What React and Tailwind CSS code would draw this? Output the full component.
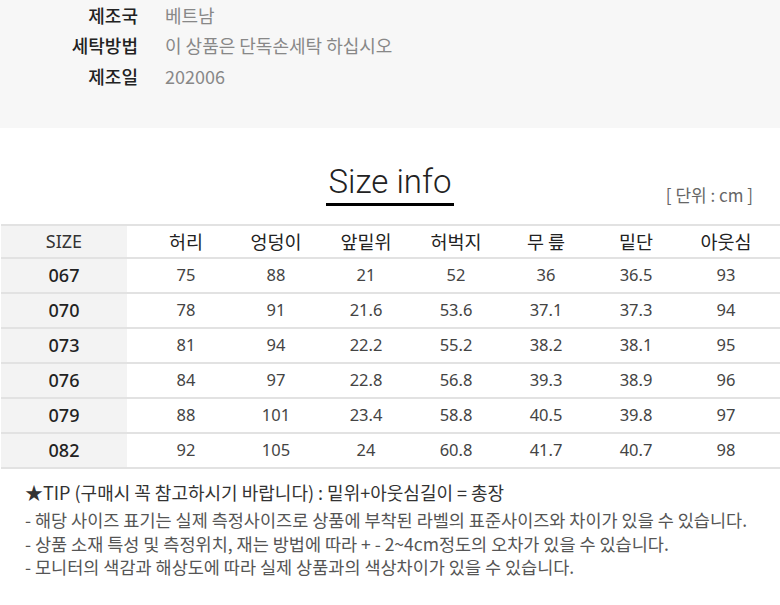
import React from "react";

const KR = { fontFamily: '"Noto Sans CJK KR", "Noto Sans", sans-serif' };
const NUM = { fontFamily: '"Noto Sans", "Noto Sans CJK KR", sans-serif' };

const headers = ["허리", "엉덩이", "앞밑위", "허벅지", "무 릎", "밑단", "아웃심"];
const rows = [
  ["067", "75", "88", "21", "52", "36", "36.5", "93"],
  ["070", "78", "91", "21.6", "53.6", "37.1", "37.3", "94"],
  ["073", "81", "94", "22.2", "55.2", "38.2", "38.1", "95"],
  ["076", "84", "97", "22.8", "56.8", "39.3", "38.9", "96"],
  ["079", "88", "101", "23.4", "58.8", "40.5", "39.8", "97"],
  ["082", "92", "105", "24", "60.8", "41.7", "40.7", "98"],
];

export default function App() {
  return (
    <div className="w-[780px] h-[605px] bg-white overflow-hidden" style={KR}>
      {/* product info */}
      <div className="h-[128px] bg-[#f7f7f7] pt-0">
        {[
          ["제조국", "베트남"],
          ["세탁방법", "이 상품은 단독손세탁 하십시오"],
          ["제조일", "202006"],
        ].map(([k, v]) => (
          <div key={k} className="flex items-center h-[30.5px] text-[18px]">
            <div className="w-[138px] text-right text-[#222] font-medium">{k}</div>
            <div className="ml-[27px] text-[#888]">{v}</div>
          </div>
        ))}
      </div>

      {/* title */}
      <div className="grid grid-cols-[1fr_auto_1fr] mt-[35px]">
        <div />
        <div
          className="border-b-[3px] border-black text-[33px] leading-[37px] font-light text-[#222] px-[3px] pb-[3px]"
          style={{ fontFamily: 'Roboto, "Noto Sans", sans-serif' }}
        >
          Size info
        </div>
        <div className="flex justify-end items-end pr-[27px] pb-[1px]">
          <span className="text-[17px] leading-[20px] text-[#666]">[ 단위 : cm ]</span>
        </div>
      </div>

      {/* table */}
      <div className="mt-[18px] border-t-2 border-[#e2e2e2] ml-[1px]">
        <div className="flex h-[33px] border-b-2 border-[#e2e2e2] items-stretch">
          <div
            className="w-[126px] bg-[#f3f3f3] flex items-center justify-center text-[18px] text-[#333]"
            style={NUM}
          >
            SIZE
          </div>
          <div className="flex ml-[14px]">
            {headers.map((h) => (
              <div key={h} className="w-[90px] flex items-center justify-center text-[18.5px] text-[#222]">
                {h}
              </div>
            ))}
          </div>
        </div>
        {rows.map((r) => (
          <div key={r[0]} className="flex h-[35px] border-b-2 border-[#e2e2e2] items-stretch" style={NUM}>
            <div className="w-[126px] bg-[#f3f3f3] flex items-center justify-center text-[18px] text-[#222] font-medium">
              {r[0]}
            </div>
            <div className="flex ml-[14px]">
              {r.slice(1).map((c, i) => (
                <div key={i} className="w-[90px] flex items-center justify-center text-[16.5px] text-[#444]">
                  {c}
                </div>
              ))}
            </div>
          </div>
        ))}
      </div>

      {/* notes */}
      <div className="pl-[25px] mt-[11px]">
        <div className="text-[18px] leading-[24px] text-[#333]">
          ★TIP (구매시 꼭 참고하시기 바랍니다) : 밑위+아웃심길이 = 총장
        </div>
        <div className="mt-[4px] text-[17.5px] leading-[23.5px] text-[#555]">
          <div>- 해당 사이즈 표기는 실제 측정사이즈로 상품에 부착된 라벨의 표준사이즈와 차이가 있을 수 있습니다.</div>
          <div>- 상품 소재 특성 및 측정위치, 재는 방법에 따라 + - 2~4cm정도의 오차가 있을 수 있습니다.</div>
          <div>- 모니터의 색감과 해상도에 따라 실제 상품과의 색상차이가 있을 수 있습니다.</div>
        </div>
      </div>
    </div>
  );
}
